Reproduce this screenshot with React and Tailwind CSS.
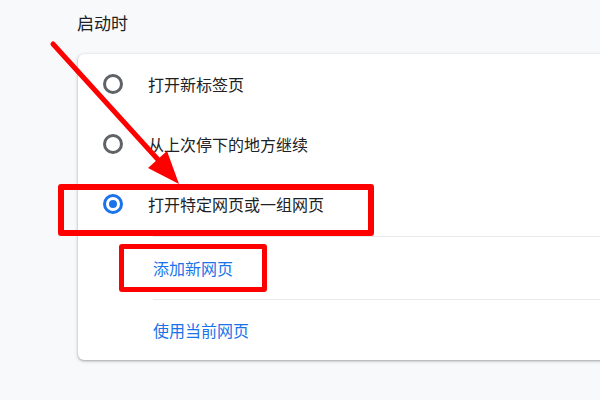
import React from "react";

const FONT = { fontFamily: '"Noto Sans CJK SC", "Noto Sans", sans-serif' };

function Radio({ checked }) {
  if (checked) {
    return (
      <span className="w-[20px] h-[20px] rounded-full border-[3px] border-[#1a73e8] flex items-center justify-center shrink-0">
        <span className="w-[8px] h-[8px] rounded-full bg-[#1a73e8]" />
      </span>
    );
  }
  return <span className="w-[20px] h-[20px] rounded-full border-[3px] border-[#5f6368] shrink-0" />;
}

function RadioRow({ label, checked }) {
  return (
    <div className="h-[60px] flex items-center pl-[25px]">
      <Radio checked={checked} />
      <span className="ml-[25px] text-[16px] text-[#202124]">{label}</span>
    </div>
  );
}

function LinkRow({ label, className = "" }) {
  return (
    <div className={"flex items-center pl-[75px] " + className}>
      <span className="text-[16px] text-[#1a73e8]">{label}</span>
    </div>
  );
}

export default function App() {
  return (
    <div className="relative w-[600px] h-[400px] overflow-hidden bg-[#f8f9fa]" style={FONT}>
      <div className="pl-[77px] pt-[10px] h-[54px] text-[17px] text-[#202124]">启动时</div>

      <div className="ml-[78px] w-[560px] h-[306px] bg-white rounded-[6px] shadow-[0_1px_2px_rgba(60,64,67,0.3),0_1px_3px_1px_rgba(60,64,67,0.15)]">
        <RadioRow label="打开新标签页" />
        <RadioRow label="从上次停下的地方继续" />
        <RadioRow label="打开特定网页或一组网页" checked />
        <div className="mt-[2px] ml-[75px] h-px bg-[#e8eaed]" />
        <LinkRow label="添加新网页" className="h-[62px]" />
        <div className="ml-[75px] h-px bg-[#e8eaed]" />
        <LinkRow label="使用当前网页" className="h-[60px]" />
      </div>

      {/* red annotation boxes */}
      <div className="absolute left-[58px] top-[184px] w-[316px] h-[52px] border-[6px] border-[#ff0000] rounded-[3px]" />
      <div className="absolute left-[119px] top-[244px] w-[148px] h-[48px] border-[5px] border-[#ff0000] rounded-[3px]" />

      {/* red arrow */}
      <svg className="absolute left-0 top-0" width="600" height="400" viewBox="0 0 600 400">
        <line x1="53" y1="44" x2="162" y2="164" stroke="#ff0000" strokeWidth="5" strokeLinecap="round" />
        <polygon points="179,184 148,168 167,151" fill="#ff0000" />
      </svg>
    </div>
  );
}
